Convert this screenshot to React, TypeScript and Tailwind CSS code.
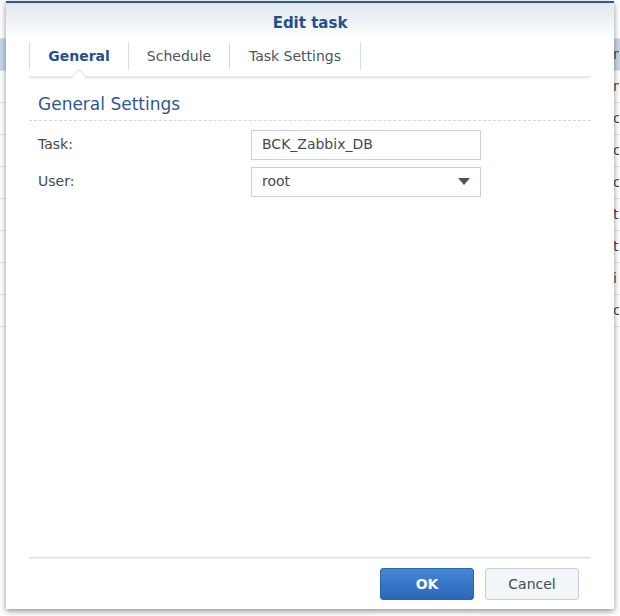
import React from "react";

const bgRows = ["n", "n", "c", "c", "c", "t", "t", "i", "c"];

function BackgroundList() {
  return (
    <div className="absolute inset-0 bg-white">
      <div className="h-[39px] border-b border-[#e3e6ea]" />
      {bgRows.map((ch, i) => (
        <div
          key={i}
          className={
            "flex h-[32px] items-center justify-end border-b border-[#e3e6ea] pr-[1px] text-[14px] text-[#414b55] " +
            (i === 0 ? "bg-[#c7d7ea]" : "")
          }
        >
          <span className="w-[6px] overflow-hidden">{ch}</span>
        </div>
      ))}
    </div>
  );
}

function Tabs() {
  return (
    <div className="relative mx-[23px] flex h-[35px] items-start border-b border-[#e6e8eb] shadow-[0_2px_2px_-1px_rgba(0,0,0,0.12)]">
      <div className="relative flex h-[28px] w-[100px] items-center justify-center border-x border-[#d5dde7] text-[14px] font-bold text-[#24508a]">
        General
        <span className="absolute left-1/2 top-[29px] h-[10px] w-[10px] -translate-x-1/2 rotate-45 border-l border-t border-[#e0e3e7] bg-white" />
      </div>
      <div className="flex h-[28px] w-[101px] items-center justify-center border-r border-[#d5dde7] text-[14px] text-[#4a5561]">
        Schedule
      </div>
      <div className="flex h-[28px] w-[131px] items-center justify-center border-r border-[#d5dde7] text-[14px] text-[#4a5561]">
        Task Settings
      </div>
    </div>
  );
}

export default function App() {
  return (
    <div className="relative h-[616px] w-[620px] overflow-hidden bg-white font-['DejaVu_Sans',sans-serif]">
      <BackgroundList />
      <div className="absolute left-[6px] top-[1px] flex h-[608px] w-[608px] flex-col bg-white shadow-[0_2px_6px_rgba(0,0,0,0.45)]">
        <div className="h-[2px] bg-[#2b5a95]" />
        <div className="flex h-[38px] items-center justify-center bg-gradient-to-b from-[#e1e8f1] to-white pt-[3px] text-[15px] font-bold text-[#23508c]">
          Edit task
        </div>
        <div className="pt-[1px]">
          <Tabs />
        </div>
        <div className="mx-[23px] flex flex-1 flex-col">
          <div className="border-b border-dashed border-[#d4d8dc] pb-[2px] pl-[9px] pt-[15px] text-[17px] text-[#2b5a93]">
            General Settings
          </div>
          <div className="mt-[9px] flex flex-col gap-[7px] pl-[9px]">
            <div className="flex h-[30px] items-center">
              <span className="w-[213px] text-[14px] text-[#414b55]">Task:</span>
              <div className="flex h-[30px] w-[230px] items-center border border-[#c6d1de] px-[10px] text-[14px] text-[#414b55]">
                BCK_Zabbix_DB
              </div>
            </div>
            <div className="flex h-[30px] items-center">
              <span className="w-[213px] text-[14px] text-[#414b55]">User:</span>
              <div className="flex h-[30px] w-[230px] items-center justify-between border border-[#c6d1de] px-[10px] text-[14px] text-[#414b55]">
                root
                <svg width="12" height="7" viewBox="0 0 12 7">
                  <path d="M0 0 H12 L6 7 Z" fill="#4a5561" />
                </svg>
              </div>
            </div>
          </div>
          <div className="flex-1" />
          <div className="h-[2px] border-t border-[#dadcdf] bg-[#eeeff0]" />
          <div className="flex h-[50px] items-start justify-end gap-[11px] pr-[12px] pt-[9px]">
            <button className="h-[32px] w-[94px] rounded-[3px] border border-[#2a62ad] bg-gradient-to-b from-[#4587d6] to-[#2a67b8] text-[14px] font-bold text-white">
              OK
            </button>
            <button className="h-[32px] w-[94px] rounded-[3px] border border-[#c9d0d8] bg-[#f3f6f9] text-[14px] text-[#414b55]">
              Cancel
            </button>
          </div>
        </div>
      </div>
    </div>
  );
}
